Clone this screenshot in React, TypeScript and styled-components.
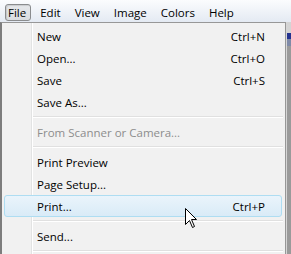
import React from 'react';
import styled, { createGlobalStyle } from 'styled-components';

interface MenuEntry {
    label?: string;
    shortcut?: string;
    disabled?: boolean;
    hot?: boolean;
    separator?: boolean;
}

const entries: MenuEntry[] = [
    { label: 'New', shortcut: 'Ctrl+N' },
    { label: 'Open...', shortcut: 'Ctrl+O' },
    { label: 'Save', shortcut: 'Ctrl+S' },
    { label: 'Save As...' },
    { separator: true },
    { label: 'From Scanner or Camera...', disabled: true },
    { separator: true },
    { label: 'Print Preview' },
    { label: 'Page Setup...' },
    { label: 'Print...', shortcut: 'Ctrl+P', hot: true },
    { separator: true },
    { label: 'Send...' },
    { separator: true },
];

const GlobalStyle = createGlobalStyle`
    html, body {
        margin: 0;
        padding: 0;
        width: 291px;
        height: 254px;
        overflow: hidden;
        background: #f0f0f0;
        font-family: "Open Sans", "DejaVu Sans", sans-serif;
        font-size: 11.5px;
        color: #000;
    }
`;

const Window = styled.div`
    position: relative;
    width: 291px;
    height: 254px;
    overflow: hidden;
`;

const MenuBar = styled.div`
    display: flex;
    align-items: center;
    height: 22px;
    padding-left: 5px;
    box-sizing: border-box;
    background: linear-gradient(#fbfcfe, #e4eaf3);
`;

const BarItem = styled.div<{ $open?: boolean }>`
    display: flex;
    align-items: center;
    height: 17px;
    margin-top: 3px;
    padding: 0 7px;
    box-sizing: border-box;
    border-radius: 3px;
    ${(p) =>
        p.$open
            ? `
        border: 1px solid #8a8c8e;
        background: linear-gradient(#e6e8eb, #d9dcdf);
        box-shadow: inset 1px 1px 1px rgba(0,0,0,0.12);
        padding: 0 4px 0 2px;
        margin-right: 2px;
    `
            : ''}
`;

const Body = styled.div`
    display: flex;
    height: 232px;
`;

const Popup = styled.div`
    width: 286px;
    box-sizing: border-box;
    border: 1px solid #979797;
    border-left: 2px solid #7d7d7d;
    border-bottom: none;
    padding: 2px 2px 0 2px;
    background: linear-gradient(90deg, #f1f1f1 29px, #e2e3e3 29px, #e2e3e3 30px, #ffffff 30px, #ffffff 31px, #f1f1f1 31px);
`;

const Row = styled.div<{ $hot?: boolean; $disabled?: boolean }>`
    display: flex;
    align-items: center;
    height: 22px;
    box-sizing: border-box;
    padding: 0 17px 0 32px;
    border-radius: 3px;
    border: 1px solid transparent;
    color: ${(p) => (p.$disabled ? '#8d8d8d' : '#000')};
    ${(p) =>
        p.$hot
            ? `
        margin: 0 1px 0 0;
        padding-right: 16px;
        border-color: #aeddf2;
        background: linear-gradient(#eaf4fb, #d9ebf7);
    `
            : ''}
`;

const Label = styled.span`
    flex: 1;
`;

const Shortcut = styled.span`
    text-align: right;
`;

const Separator = styled.div`
    height: 8px;
    margin-left: 29px;
    display: flex;
    flex-direction: column;
    justify-content: center;
`;

const SepLine = styled.div`
    height: 1px;
    background: #e0e0e0;
    border-bottom: 1px solid #ffffff;
`;

const Edge = styled.div`
    flex: 1;
    display: flex;
    flex-direction: column;
    background: #9a9a9a;
    border-left: 1px solid #d6d6d6;
`;

const EdgeBand = styled.div<{ $h: number; $c: string }>`
    height: ${(p) => p.$h}px;
    background: ${(p) => p.$c};
`;

const Cursor = styled.svg`
    position: absolute;
    left: 185px;
    top: 208px;
`;

const App: React.FC = () => {
    return (
        <Window>
            <GlobalStyle />
            <MenuBar>
                <BarItem $open>File</BarItem>
                <BarItem>Edit</BarItem>
                <BarItem>View</BarItem>
                <BarItem>Image</BarItem>
                <BarItem>Colors</BarItem>
                <BarItem>Help</BarItem>
            </MenuBar>
            <Body>
                <Popup>
                    {entries.map((e, i) =>
                        e.separator ? (
                            <Separator key={i}>
                                <SepLine />
                            </Separator>
                        ) : (
                            <Row key={i} $hot={e.hot} $disabled={e.disabled}>
                                <Label>{e.label}</Label>
                                {e.shortcut && <Shortcut>{e.shortcut}</Shortcut>}
                            </Row>
                        ),
                    )}
                </Popup>
                <Edge>
                    <EdgeBand $h={11} $c="#d4d4d4" />
                    <EdgeBand $h={6} $c="#24328f" />
                    <EdgeBand $h={7} $c="#7f8aa8" />
                </Edge>
            </Body>
            <Cursor width="13" height="21" viewBox="0 0 13 21">
                <path
                    d="M0.5 0.5 L0.5 16.5 L4.5 12.5 L7.5 19.5 L9.5 18.5 L6.5 11.5 L11.5 11.5 Z"
                    fill="#ffffff"
                    stroke="#000000"
                    strokeWidth="1"
                    strokeLinejoin="miter"
                />
            </Cursor>
        </Window>
    );
};

export default App;
